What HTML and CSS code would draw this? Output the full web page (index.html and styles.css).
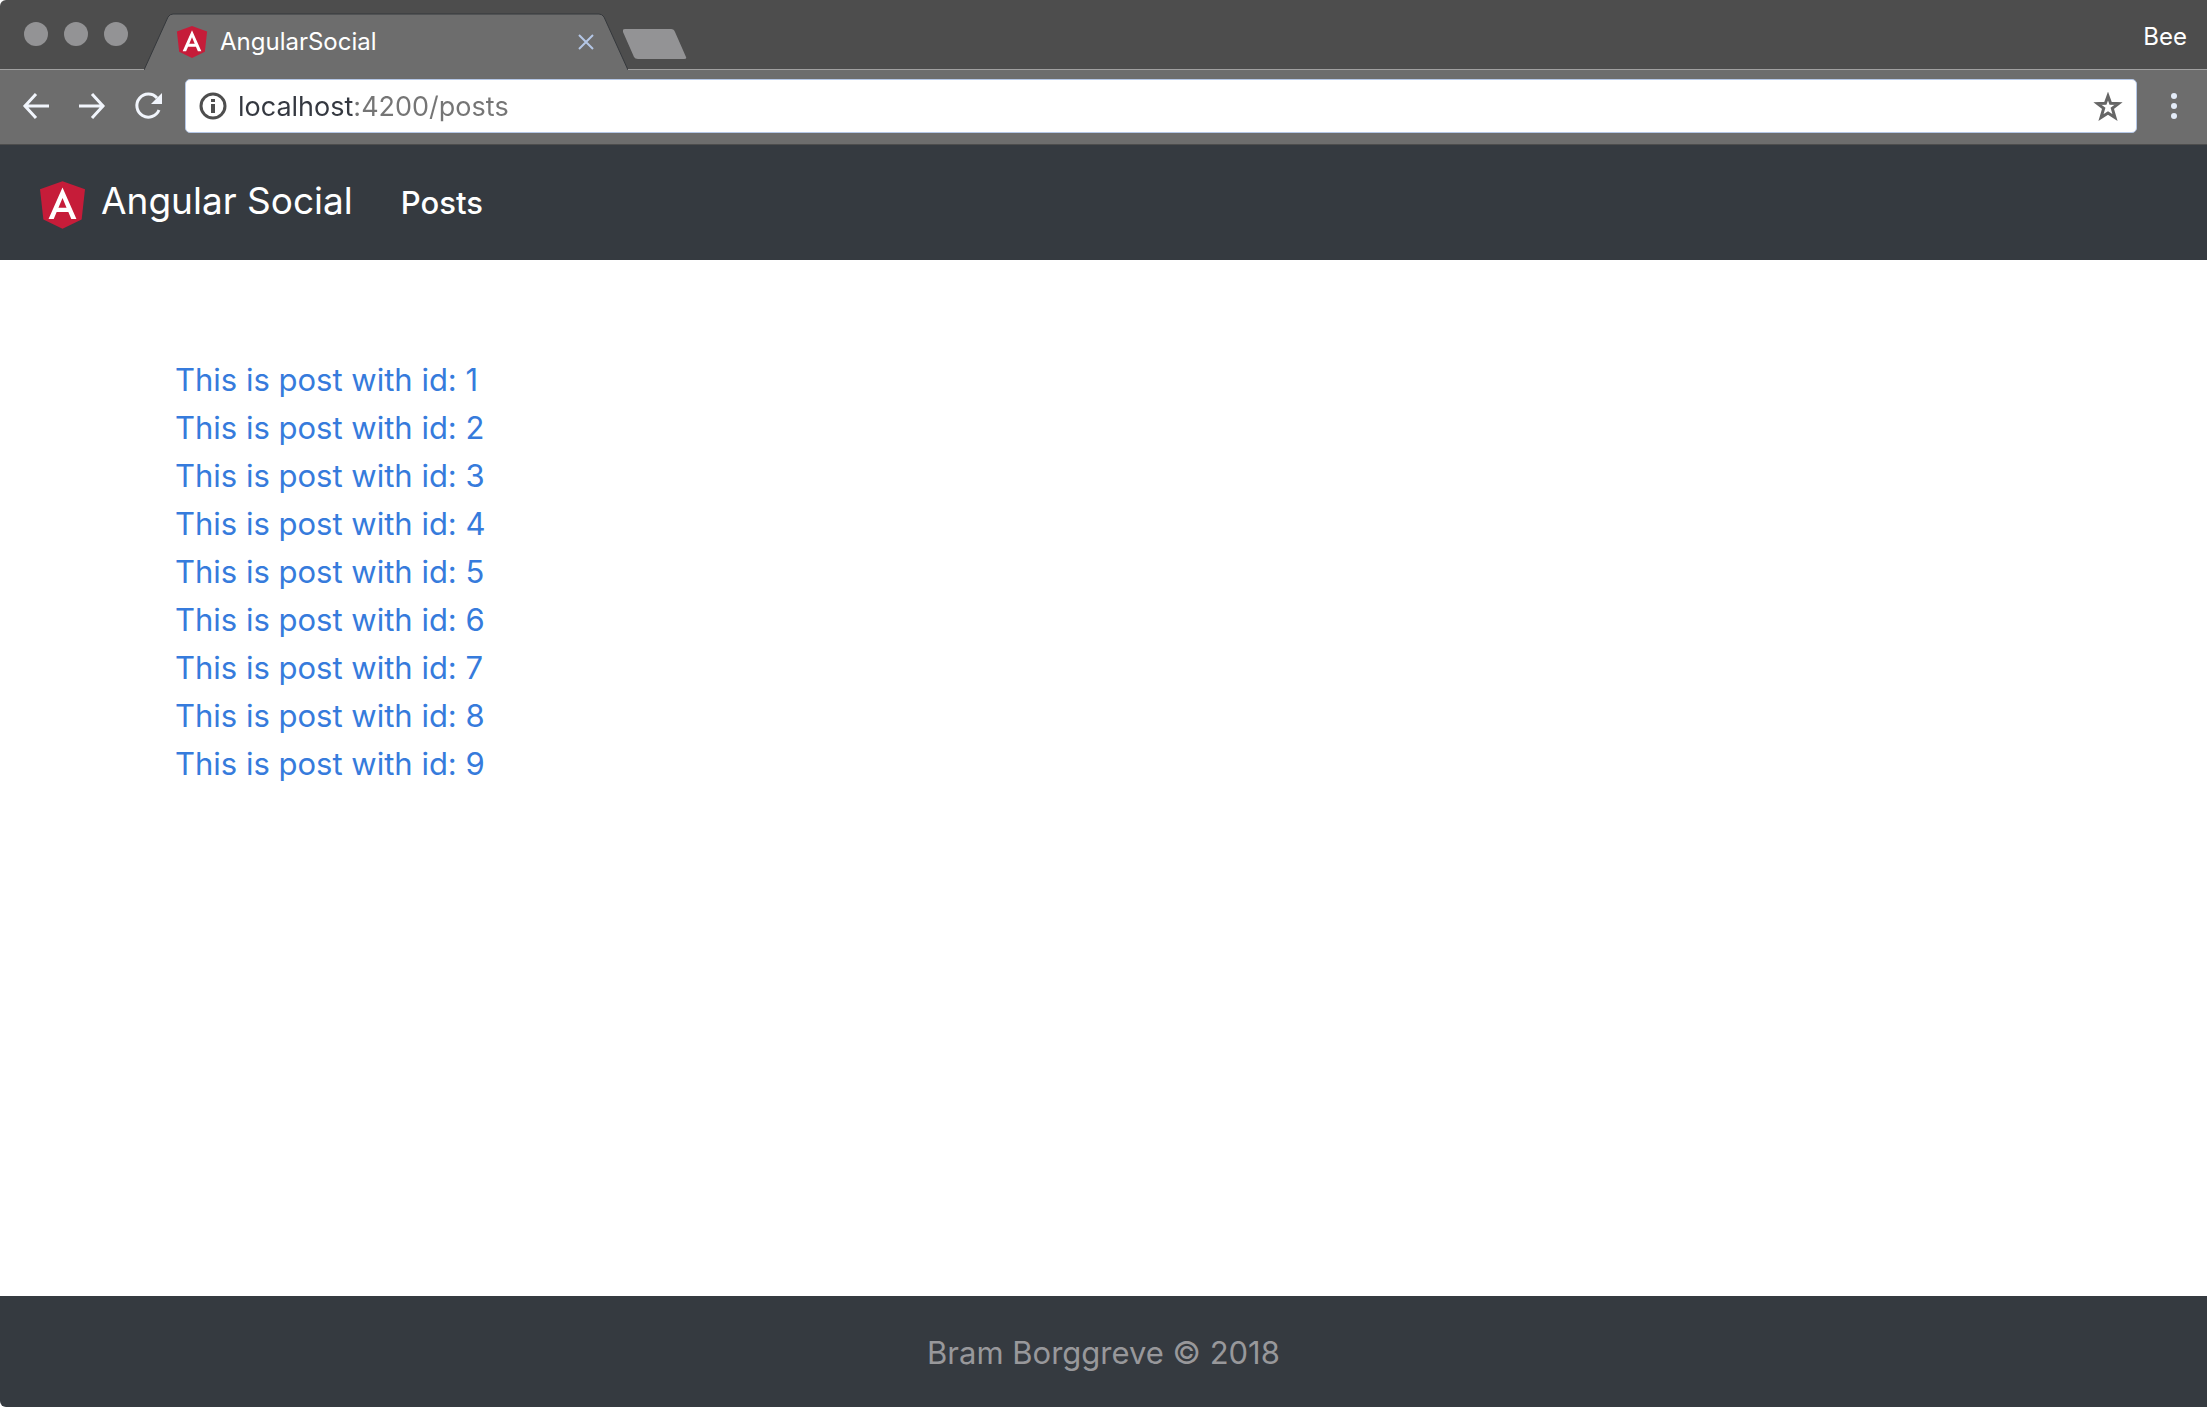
FILE: index.html
```html
<!DOCTYPE html>
<html lang="en">
<head>
  <meta charset="utf-8">
  <meta name="viewport" content="width=device-width, initial-scale=1">
  <title>AngularSocial</title>
  <link rel="stylesheet" href="styles.css">
</head>
<body>
  <svg class="symbols" aria-hidden="true">
    <symbol id="angular-logo" viewBox="25 24 200 212">
      <path fill="#c61c39" d="M125 24 25 60l15 134 85 42 85-42 15-134z"/>
      <path fill="#fff" d="M125 52 63 192h23l13-31h52l13 31h23L125 52zm18 90h-36l18-43z"/>
    </symbol>
  </svg>

  <header class="tab-strip">
    <div class="window-controls">
      <button class="window-dot" type="button" aria-label="Close window"></button>
      <button class="window-dot" type="button" aria-label="Minimize window"></button>
      <button class="window-dot" type="button" aria-label="Zoom window"></button>
    </div>
    <div class="tab">
      <svg class="tab-shape" viewBox="0 0 484 57" preserveAspectRatio="none" aria-hidden="true">
        <path fill="#6d6d6d" d="M0 57 24 4Q26 1 29 1H455Q458 1 460 4L484 57z"/>
        <path fill="none" stroke="#35383c" d="M0 57 24 4Q26 1 29 1H455Q458 1 460 4L484 57"/>
      </svg>
      <svg class="tab-icon" aria-hidden="true"><use href="#angular-logo"/></svg>
      <span class="tab-title">AngularSocial</span>
      <button class="tab-close" type="button" aria-label="Close tab">
        <svg width="16" height="16" viewBox="0 0 16 16" fill="none" stroke="#b5c7e6" stroke-width="2"><path d="M1 1 15 15M15 1 1 15"/></svg>
      </button>
    </div>
    <button class="new-tab" type="button" aria-label="New tab">
      <svg width="64" height="31" viewBox="0 0 64 31"><path fill="#939395" d="M2 0H48Q51 0 52 3L63 28Q64 30 61 30H15Q12 30 11 28L0 3Q-1 0 2 0z"/></svg>
    </button>
    <button class="profile" type="button">Bee</button>
  </header>

  <div class="toolbar">
    <button class="tool" type="button" aria-label="Back">
      <svg width="28" height="28" viewBox="0 0 28 28" fill="none" stroke="#f1f5fc" stroke-width="3"><path d="M14 2 3 14 14 26M2 14H27"/></svg>
    </button>
    <button class="tool" type="button" aria-label="Forward">
      <svg width="28" height="28" viewBox="0 0 28 28" fill="none" stroke="#f1f5fc" stroke-width="3"><path d="M14 2 25 14 14 26M26 14H1"/></svg>
    </button>
    <button class="tool" type="button" aria-label="Reload">
      <svg width="28" height="28" viewBox="0 0 28 28"><path fill="none" stroke="#f1f5fc" stroke-width="3" d="M23 6A11.500 11.500 0 1 0 25 18"/><path fill="#f1f5fc" d="M28 1V12H17z"/></svg>
    </button>
    <form class="address">
      <svg class="address-info" width="28" height="28" viewBox="0 0 28 28" aria-hidden="true">
        <circle cx="14" cy="14" r="12" fill="none" stroke="#4e4e4e" stroke-width="3"/>
        <path fill="#4e4e4e" d="M12 7h4v3h-4zM12 12h4v9h-4z"/>
      </svg>
      <input class="address-input" type="text" aria-label="Address" value="localhost:4200/posts">
      <button class="address-star" type="button" aria-label="Bookmark this page">
        <svg width="30" height="29" viewBox="0 0 30 29"><path fill="none" stroke="#666" stroke-width="3" d="M15 4 17.600 11.200 25.500 11.600 19.300 16.400 22 25.500 15 21 8 25.500 10.700 16.400 4.500 11.600 12.400 11.200z"/></svg>
      </button>
    </form>
    <button class="menu" type="button" aria-label="Menu">
      <svg width="6" height="26" viewBox="0 0 6 26" fill="#e3ebf8"><circle cx="3" cy="3" r="3"/><circle cx="3" cy="13" r="3"/><circle cx="3" cy="23" r="3"/></svg>
    </button>
  </div>

  <nav class="navbar">
    <a class="brand" href="#">
      <svg class="brand-logo" aria-hidden="true"><use href="#angular-logo"/></svg>
      <span class="brand-name">Angular Social</span>
    </a>
    <a class="nav-link" href="#posts">Posts</a>
  </nav>

  <main class="content" id="posts">
    <ul class="posts">
      <li><a href="#1">This is post with id: 1</a></li>
      <li><a href="#2">This is post with id: 2</a></li>
      <li><a href="#3">This is post with id: 3</a></li>
      <li><a href="#4">This is post with id: 4</a></li>
      <li><a href="#5">This is post with id: 5</a></li>
      <li><a href="#6">This is post with id: 6</a></li>
      <li><a href="#7">This is post with id: 7</a></li>
      <li><a href="#8">This is post with id: 8</a></li>
      <li><a href="#9">This is post with id: 9</a></li>
    </ul>
  </main>

  <footer class="footer">Bram Borggreve © 2018</footer>
</body>
</html>
```
FILE: styles.css
```css
* {
  box-sizing: border-box;
}

body {
  display: flex;
  flex-direction: column;
  min-height: 100vh;
  margin: 0;
  background: #fff;
  font-family: Inter, "Liberation Sans", sans-serif;
  font-size: 31px;
  line-height: 48px;
}

a {
  text-decoration: none;
}

button {
  padding: 0;
  border: 0;
  background: none;
  color: inherit;
  font: inherit;
}

svg {
  display: block;
}

.symbols {
  position: absolute;
  width: 0;
  height: 0;
}

/* Window tab strip */
.tab-strip {
  display: flex;
  height: 70px;
  background: #4d4d4d;
  border-bottom: 1px solid #a0a0a0;
  border-top-left-radius: 6px;
  color: #fff;
  font-size: 24px;
  line-height: 32px;
}

.window-controls {
  display: flex;
  gap: 16px;
  padding: 22px 16px 0 24px;
}

.window-dot {
  width: 24px;
  height: 24px;
  border-radius: 50%;
  background: #939395;
}

.tab {
  position: relative;
  display: flex;
  align-items: center;
  gap: 12px;
  width: 484px;
  height: 57px;
  margin-top: 13px;
  padding: 0 34px 0 32px;
}

.tab-shape {
  position: absolute;
  inset: 0;
  width: 100%;
  height: 100%;
}

.tab-icon,
.tab-title,
.tab-close {
  position: relative;
}

.tab-icon {
  width: 32px;
  height: 32px;
}

.tab-title {
  flex: 1;
}

.new-tab {
  align-self: flex-start;
  margin: 29px 0 0 -5px;
}

.profile {
  margin: 4px 20px 0 auto;
}

/* Navigation toolbar */
.toolbar {
  display: flex;
  align-items: center;
  gap: 28px;
  height: 74px;
  padding: 0 30px 2px 22px;
  background: #6d6d6d;
}

.address {
  display: flex;
  flex: 1;
  align-items: center;
  gap: 11px;
  height: 54px;
  margin-left: -5px;
  padding: 0 13px;
  border: 1px solid #b5c7e6;
  border-radius: 5px;
  background: #fff;
}

.address-input {
  flex: 1;
  min-width: 0;
  padding: 2px 0 0;
  border: 0;
  outline: 0;
  background: linear-gradient(to right, #343840 117px, #757575 117px);
  background-clip: text;
  color: transparent;
  font: inherit;
  font-size: 27px;
  line-height: 40px;
}

.menu {
  margin-left: 6px;
}

/* Application */
.navbar {
  display: flex;
  align-items: center;
  gap: 48px;
  height: 116px;
  padding: 0 40px;
  border-top: 1px solid #4d4d4d;
  background: #353a40;
}

.brand {
  display: flex;
  align-items: center;
  gap: 16px;
  color: #fff;
  font-size: 37px;
}

.brand-logo {
  width: 45px;
  height: 48px;
  margin-top: 4px;
}

.brand-name {
  padding-bottom: 4px;
}

.nav-link {
  color: #fff;
  font-weight: 500;
}

.content {
  flex: 1;
  padding: 96px 175px;
}

.posts {
  margin: 0;
  padding: 0;
  list-style: none;
}

.posts a {
  color: #367bdc;
}

.footer {
  padding: 33px 32px 30px;
  border-bottom-left-radius: 6px;
  background: #353a40;
  color: #98989b;
  text-align: center;
}
```
